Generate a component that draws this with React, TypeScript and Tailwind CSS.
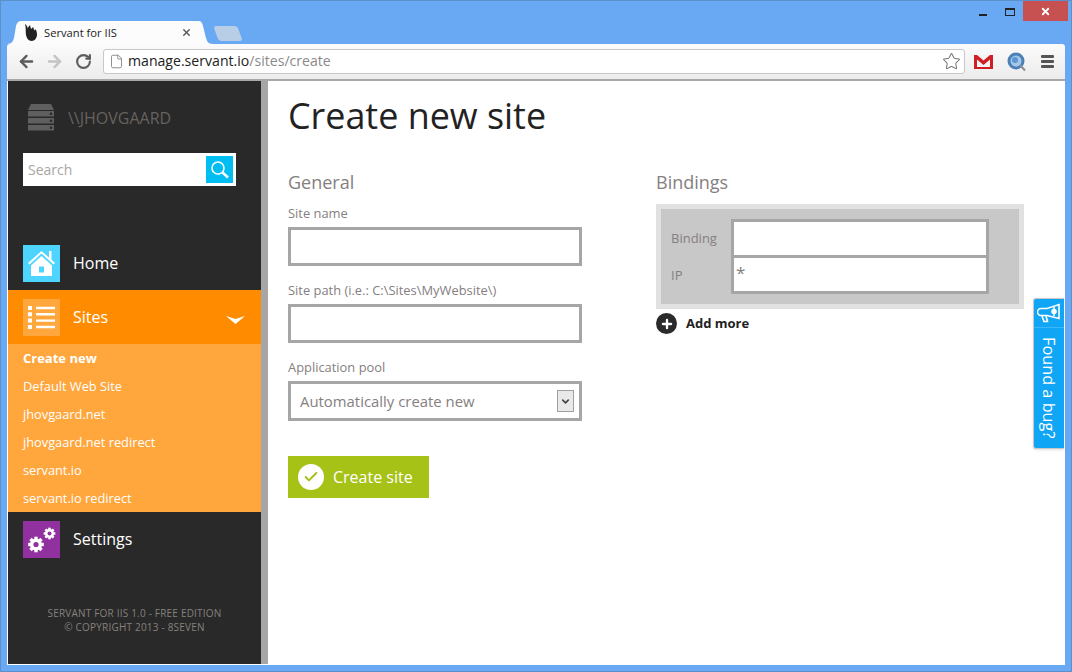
import { ArrowLeft, ArrowRight, RotateCw, File, Star, Check, Plus, X, ChevronDown } from 'lucide-react';

const siteLinks = ['Default Web Site', 'jhovgaard.net', 'jhovgaard.net redirect', 'servant.io', 'servant.io redirect'];

function ServerIcon() {
  return (
    <svg width="26" height="27" viewBox="0 0 26 27" fill="#5f5f5f">
      <path d="M3 0h20l3 6H0z" />
      <path d="M0 7h26v5.500H0zM0 14h26v5.500H0zM0 21h26v5.500H0z" />
      <circle cx="23" cy="9.800" r="1.300" fill="#2a2a2a" />
      <circle cx="23" cy="16.800" r="1.300" fill="#2a2a2a" />
      <circle cx="23" cy="23.800" r="1.300" fill="#2a2a2a" />
    </svg>
  );
}

function HomeIcon() {
  return (
    <svg width="27" height="25" viewBox="0 0 27 25" fill="#fff">
      <path d="M21 0h2.500v8.500L27 12l-1.500 1.500L13.500 2.500 1.500 13.500 0 12 13.500 0l7.500 6.500z" />
      <path fillRule="evenodd" d="M13.500 5L24 14.500V25H3V14.500zM11 15.500v6h5v-6z" />
    </svg>
  );
}

function ListIcon() {
  return (
    <svg width="27" height="23" viewBox="0 0 27 23" fill="#fff">
      <path d="M0 0h4v4H0zM0 6.300h4v4H0zM0 12.600h4v4H0zM0 19h4v4H0z" />
      <path d="M8 .800h19v2.400H8zM8 7.100h19v2.400H8zM8 13.400h19v2.400H8zM8 19.800h19v2.400H8z" />
    </svg>
  );
}

function GearShape({ cx, cy, r, hole }: { cx: number; cy: number; r: number; hole: number }) {
  const teeth = [0, 45, 90, 135];
  return (
    <g>
      {teeth.map(a => (
        <rect
          key={a}
          x={cx - r * 0.28}
          y={cy - r * 1.3}
          width={r * 0.56}
          height={r * 2.6}
          transform={`rotate(${a} ${cx} ${cy})`}
        />
      ))}
      <circle cx={cx} cy={cy} r={r} />
      <circle cx={cx} cy={cy} r={hole} fill="#91319f" />
    </g>
  );
}

function SettingsIcon() {
  return (
    <svg width="28" height="26" viewBox="0 0 28 26" fill="#fff">
      <GearShape cx={8} cy={17.500} r={6} hole={2.600} />
      <GearShape cx={21.500} cy={6.500} r={4.500} hole={2} />
    </svg>
  );
}

function FlameIcon() {
  return (
    <svg width="14" height="17" viewBox="0 0 14 17" fill="#222">
      <path d="M1 0c1.500 1 2.500 2.500 2.800 4.500C4.200 3 5 1.800 6.200 1c-.2 1.800.6 3 1.300 4 .4-.9 1-1.600 1.900-2-.2 1.600.6 2.600 1.400 3.400.2-.6.6-1 1.200-1.200-.2 1.300 1.300 3 1 5.800-.3 3-2.300 6-5.300 6C4.500 17 2.600 14 2 11 1.400 8 2.200 3.500 1 0z" />
    </svg>
  );
}

function GmailIcon() {
  return (
    <svg width="19" height="14" viewBox="0 0 19 14">
      <path d="M0 0h19v14H0z" fill="#f4f4f4" />
      <path d="M0 0h3l6.500 5.500L16 0h3v14H0zM3 4.500V12h13V4.500L9.500 10z" fill="#cf1f25" />
    </svg>
  );
}

function GlobeIcon() {
  return (
    <svg width="19" height="20" viewBox="0 0 19 20">
      <circle cx="9" cy="9" r="8.500" fill="#4a7fb8" />
      <circle cx="9" cy="9" r="5.500" fill="#a6c8e8" />
      <circle cx="8" cy="8" r="3" fill="#5b95d2" />
      <path d="M13 13l5 5.500" stroke="#8a8f96" strokeWidth="2" />
    </svg>
  );
}

function MegaphoneIcon() {
  return (
    <svg width="24" height="20" viewBox="0 0 24 20" fill="none" stroke="#fff" strokeWidth="1.600">
      <path d="M22 1.500v14L10 12.500H4a3 3 0 0 1 0-7h6z" />
      <path d="M5 13l2 5.500h3.500L9 13" />
      <path d="M17 4v9" />
      <circle cx="17" cy="8.500" r="2" fill="#fff" />
    </svg>
  );
}

function Field({ label, children }: { label: string; children: React.ReactNode }) {
  return (
    <div>
      <div className="h-[20px] text-[12.900px] leading-[20px] text-[#85807f]">{label}</div>
      {children}
    </div>
  );
}

export default function App() {
  return (
    <div className="relative flex h-[672px] w-[1072px] flex-col overflow-hidden border border-[#5d8fcb] bg-[#69a9f4] pb-[6px] pl-[6px] pr-[6px] font-['Open_Sans',sans-serif]">
      {/* window frame */}
      <div className="flex h-[43px] shrink-0 items-end">
        <div className="relative z-10 ml-[8px] flex h-[23px] w-[186px] items-center pl-[9px] pr-[9px]">
          <svg className="absolute left-[-8px] top-0" width="206" height="23" viewBox="0 0 206 23" fill="#fcfcfc">
            <path d="M0 23C5 23 6 20 7 17L9 5C10 1 12 0 15 0H191C194 0 195 1 196 5L199 17C200 20 201 23 206 23Z" />
          </svg>
          <div className="relative flex w-full items-center">
            <FlameIcon />
            <span className="ml-[6px] flex-1 text-[11.200px] leading-none text-[#222]">Servant for IIS</span>
            <X size={11} strokeWidth={3} className="text-[#555]" />
          </div>
        </div>
        <div className="mb-[3px] ml-[15px] h-[15px] w-[24px] skew-x-[20deg] rounded-[3px] bg-[#b8cde6]" />
      </div>

      <div className="flex h-[37px] shrink-0 items-center rounded-t-[3px] border-b-2 border-[#a8a8a8] bg-gradient-to-b from-[#fbfbfb] to-[#ececec] pl-[10px]">
        <ArrowLeft size={19} strokeWidth={3} className="text-[#5c5c5c]" />
        <ArrowRight size={19} strokeWidth={3} className="ml-[9px] text-[#c4c4c4]" />
        <RotateCw size={17} strokeWidth={3} className="ml-[11px] text-[#5c5c5c]" />
        <div className="ml-[11px] flex h-[25px] w-[862px] items-center rounded-[3px] border border-[#c8c8c8] bg-white pl-[5px] pr-[3px]">
          <File size={15} strokeWidth={1.500} className="text-[#8a8a8a]" />
          <span className="ml-[4px] flex-1 text-[14.100px] leading-none text-[#222]">
            manage.servant.io<span className="text-[#8a8a8a]">/sites/create</span>
          </span>
          <Star size={19} strokeWidth={1.300} className="text-[#777]" />
        </div>
        <div className="ml-[9px]"><GmailIcon /></div>
        <div className="ml-[14px]"><GlobeIcon /></div>
        <div className="ml-[15px] flex w-[13px] flex-col gap-[2px]">
          <div className="h-[3px] rounded-[1px] bg-[#555]" />
          <div className="h-[3px] rounded-[1px] bg-[#555]" />
          <div className="h-[3px] rounded-[1px] bg-[#555]" />
        </div>
      </div>

      <div className="flex min-h-0 flex-1 border-b border-l border-white">
        {/* sidebar */}
        <div className="flex w-[253px] shrink-0 flex-col bg-[#292929]">
          <div className="flex h-[72px] items-center pl-[20px] pt-[1px]">
            <ServerIcon />
            <span className="ml-[14px] text-[16px] text-[#66625f]">\\JHOVGAARD</span>
          </div>
          <div className="ml-[15px] flex h-[33px] w-[213px] items-center bg-white pl-[5px] pr-[3px]">
            <span className="flex-1 text-[14px] text-[#a9a5a3]">Search</span>
            <div className="flex h-[27px] w-[27px] items-center justify-center bg-[#00bef2]">
              <svg width="20" height="20" viewBox="0 0 20 20" fill="none" stroke="#fff">
                <circle cx="8" cy="8" r="6" strokeWidth="1.600" />
                <path d="M12.500 12.500l5.500 5" strokeWidth="2.600" />
              </svg>
            </div>
          </div>

          <div className="mt-[59px] flex h-[37px] items-center pl-[15px]">
            <div className="flex h-[37px] w-[37px] items-center justify-center bg-[#4dd5ff]"><HomeIcon /></div>
            <span className="ml-[13px] pb-[2px] text-[16px] text-white">Home</span>
          </div>

          <div className="mt-[8px] flex h-[54px] items-center bg-[#ff8c00] pl-[15px] pr-[16px]">
            <div className="flex h-[37px] w-[37px] items-center justify-center bg-[#ffa63d]"><ListIcon /></div>
            <span className="ml-[13px] flex-1 text-[16px] text-white">Sites</span>
            <svg className="mt-[5px]" width="19" height="8" viewBox="0 0 19 8" fill="#fff">
              <path d="M0 0l9.500 3L19 0l-9.500 8z" />
            </svg>
          </div>
          <div className="bg-[#ffa63d] pl-[15px]">
            <div className="h-[28px] text-[13px] font-bold leading-[28px] text-white">Create new</div>
            {siteLinks.map(name => (
              <div key={name} className="h-[28px] text-[12.800px] font-normal leading-[28px] text-white">{name}</div>
            ))}
          </div>

          <div className="mt-[9px] flex h-[37px] items-center pl-[15px]">
            <div className="flex h-[37px] w-[37px] items-center justify-center bg-[#91319f]"><SettingsIcon /></div>
            <span className="ml-[13px] pb-[2px] text-[16px] text-white">Settings</span>
          </div>

          <div className="mt-[48px] text-center text-[10px] leading-[14px] tracking-[0.2px] text-[#85817d]">
            <div>SERVANT FOR IIS 1.0 - FREE EDITION</div>
            <div>© COPYRIGHT 2013 - 8SEVEN</div>
          </div>
        </div>

        <div className="w-[7px] shrink-0 bg-[#a6a6a6]" />

        {/* main */}
        <div className="flex-1 bg-white pl-[20px]">
          <h1 className="mt-[10px] h-[50px] text-[35.900px] font-normal leading-[50px] text-[#222]">Create new site</h1>
          <div className="mt-[26px] flex">
            <div className="w-[368px]">
              <h2 className="h-[30px] text-[18px] leading-[30px] text-[#85807f]">General</h2>
              <div className="mt-[6px] flex flex-col gap-[14px]">
                <Field label="Site name">
                  <div className="mt-[4px] h-[39px] w-[294px] border-[3px] border-[#a6a6a6] bg-white" />
                </Field>
                <Field label="Site path (i.e.: C:\Sites\MyWebsite\)">
                  <div className="mt-[4px] h-[39px] w-[294px] border-[3px] border-[#a6a6a6] bg-white" />
                </Field>
                <Field label="Application pool">
                  <div className="mt-[4px] flex h-[40px] w-[294px] items-center border-[3px] border-[#a6a6a6] bg-white pl-[9px] pr-[5px]">
                    <span className="flex-1 text-[14.900px] text-[#85807f]">Automatically create new</span>
                    <div className="flex h-[22px] w-[17px] items-center justify-center border border-[#a0a0a0] bg-[#e9e9e9]">
                      <ChevronDown size={11} strokeWidth={3.500} className="text-[#444]" />
                    </div>
                  </div>
                </Field>
              </div>
              <div className="mt-[35px] flex h-[42px] w-[141px] items-center bg-[#a6c216] pl-[10px]">
                <div className="flex h-[26px] w-[26px] items-center justify-center rounded-full bg-white">
                  <Check size={16} strokeWidth={3} className="text-[#a6c216]" />
                </div>
                <span className="ml-[9px] text-[16px] text-white">Create site</span>
              </div>
            </div>

            <div className="w-[368px]">
              <h2 className="h-[30px] text-[18px] leading-[30px] text-[#85807f]">Bindings</h2>
              <div className="mt-[7px] border-[5px] border-[#e1e1e1] bg-[#c8c8c8] py-[10px] pl-[10px]">
                <div className="flex h-[39px] items-center">
                  <span className="w-[60px] text-[13px] text-[#85807f]">Binding</span>
                  <div className="h-[39px] w-[258px] border-[3px] border-[#a6a6a6] bg-white" />
                </div>
                <div className="-mt-[3px] flex h-[39px] items-center">
                  <span className="w-[60px] pt-[2px] text-[13px] text-[#85807f]">IP</span>
                  <div className="h-[39px] w-[258px] border-[3px] border-[#a6a6a6] bg-white pl-[2px] text-[17px] leading-[30px] text-[#85807f]">*</div>
                </div>
              </div>
              <div className="mt-[4px] flex items-center">
                <div className="flex h-[21px] w-[21px] items-center justify-center rounded-full bg-[#2a2a2a]">
                  <Plus size={14} strokeWidth={4} className="text-white" />
                </div>
                <span className="ml-[9px] text-[13px] font-bold text-[#222]">Add more</span>
              </div>
            </div>
          </div>
        </div>
      </div>

      {/* window buttons */}
      <div className="absolute right-[3px] top-0 flex items-start">
        <div className="mr-[18px] mt-[13px] h-[2px] w-[8px] bg-[#222]" />
        <div className="mr-[8px] mt-[7px] h-[8px] w-[10px] border border-t-[2px] border-[#222]" />
        <div className="flex h-[20px] w-[45px] items-center justify-center bg-[#c75050]">
          <X size={11} strokeWidth={4} className="text-white" />
        </div>
      </div>

      {/* feedback tab */}
      <div className="absolute left-[1032px] top-[297px] flex h-[151px] w-[31px] flex-col items-center rounded-l-[3px] border border-r-0 border-[#c8c8c8] bg-[#10a5f5] shadow-sm">
        <div className="flex h-[29px] w-full items-center justify-center border-b border-[#3bb6f7]">
          <MegaphoneIcon />
        </div>
        <div className="mt-[9px] text-[16.300px] leading-none text-white [writing-mode:vertical-rl]">Found a bug?</div>
      </div>
    </div>
  );
}
